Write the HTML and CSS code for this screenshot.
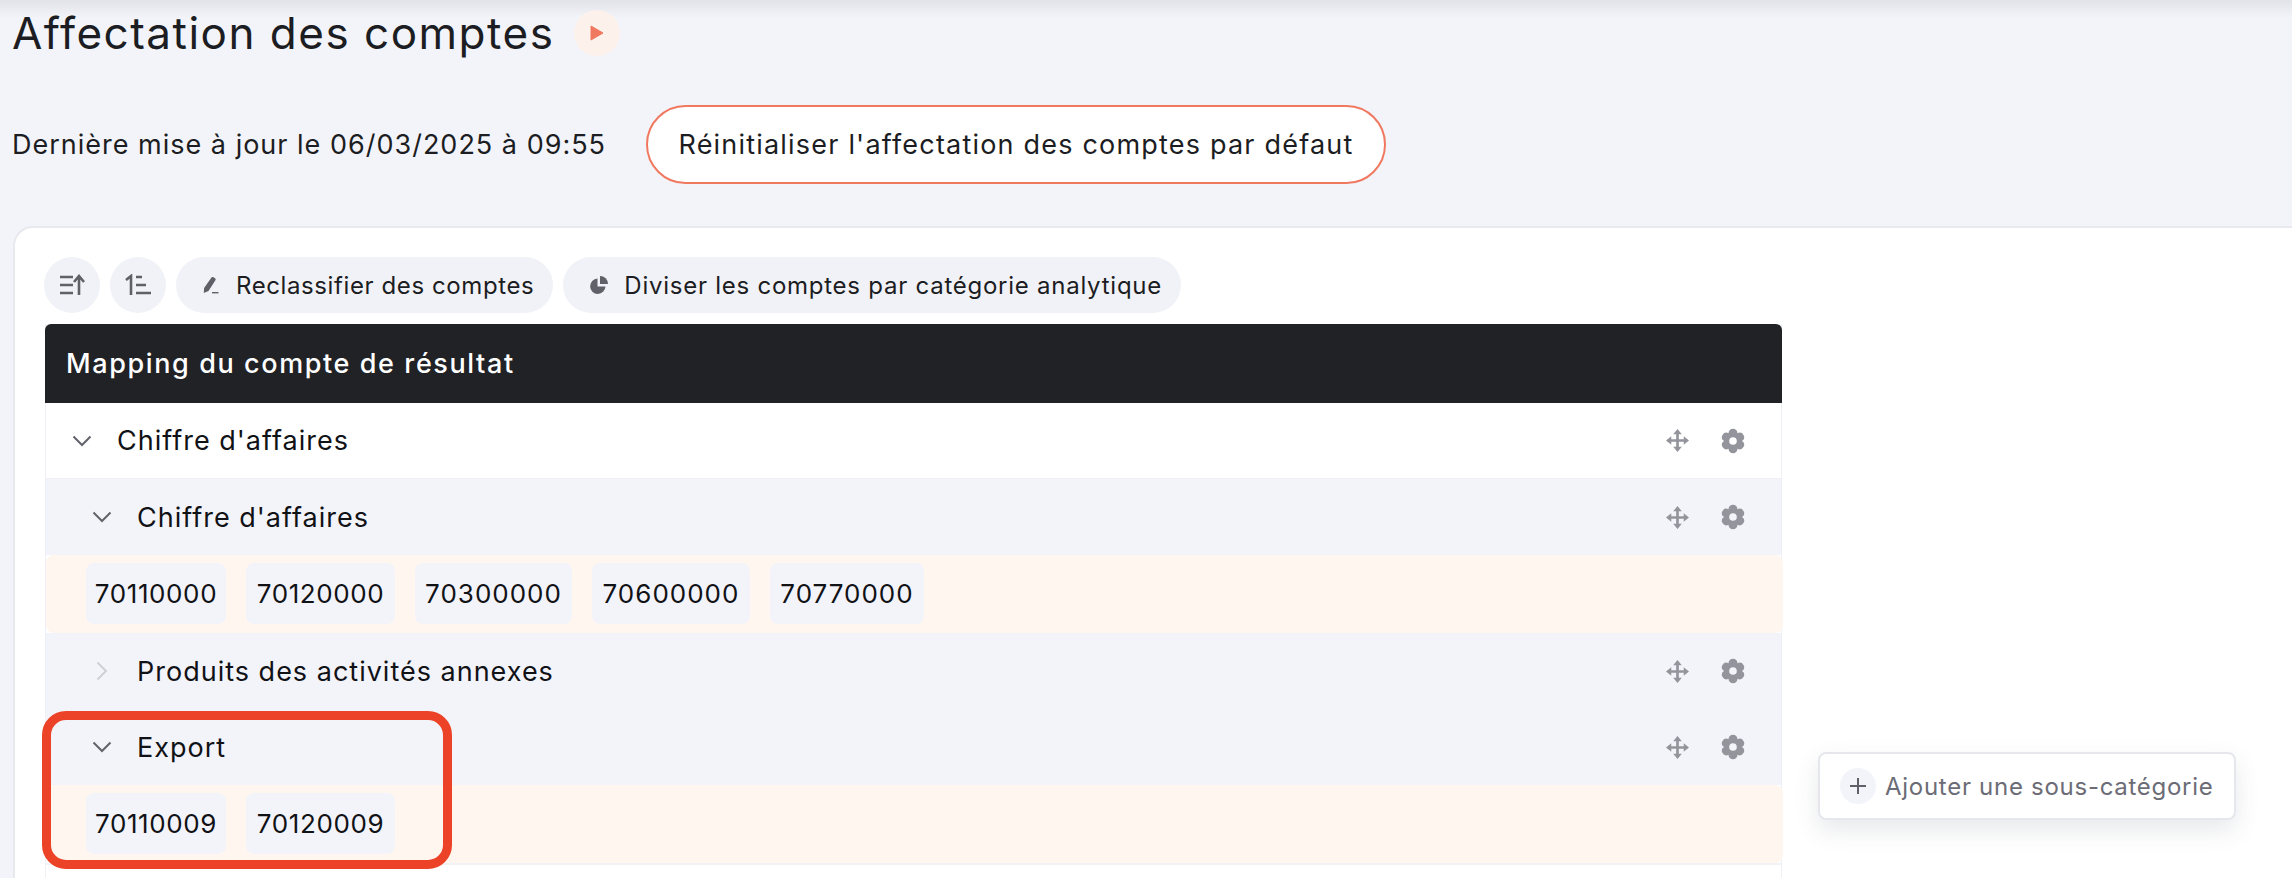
FILE: index.html
```html
<!DOCTYPE html>
<html lang="fr">
<head>
<meta charset="utf-8">
<title>Affectation des comptes</title>
<link rel="stylesheet" href="styles.css">
</head>
<body>
<svg class="defs" width="0" height="0" aria-hidden="true">
  <symbol id="move" viewBox="0 0 24 24">
    <path d="M12 3v18M3 12h18" fill="none" stroke="currentColor" stroke-width="2.800"/>
    <path d="M12 0l4.500 5.500h-9zM12 24l-4.500-5.500h9zM0 12l5.500-4.500v9zM24 12l-5.500-4.500v9z" fill="currentColor"/>
  </symbol>
  <symbol id="gear" viewBox="0 0 24 26">
    <path fill-rule="evenodd" fill="currentColor" d="M7.500 5.210A4.500 4.500 0 0 1 16.500 5.210A4.500 4.500 0 0 1 20.990 13A4.500 4.500 0 0 1 16.500 20.790A4.500 4.500 0 0 1 7.500 20.790A4.500 4.500 0 0 1 3.010 13A4.500 4.500 0 0 1 7.500 5.210zM12 9.200a3.800 3.800 0 1 0 0 7.600a3.800 3.800 0 0 0 0-7.600z"/>
  </symbol>
  <symbol id="chev-down" viewBox="0 0 20 12">
    <path d="M1.500 1.500L10 10l8.500-8.500" fill="none" stroke="currentColor" stroke-width="2"/>
  </symbol>
  <symbol id="chev-right" viewBox="0 0 12 20">
    <path d="M1.500 1.500L10 10l-8.500 8.500" fill="none" stroke="currentColor" stroke-width="2"/>
  </symbol>
</svg>

<header class="page-head">
  <div class="title-row">
    <h1 class="title">Affectation des comptes</h1>
    <span class="play"><svg width="14" height="16" viewBox="0 0 14 16"><path d="M1 1l12 7-12 7z" fill="#f0785f" stroke="#f0785f" stroke-linejoin="round"/></svg></span>
  </div>
  <div class="meta-row">
    <span class="updated">Dernière mise à jour le 06/03/2025 à 09:55</span>
    <button class="reset">Réinitialiser l'affectation des comptes par défaut</button>
  </div>
</header>

<main class="panel">
  <div class="toolbar">
    <button class="round-btn" aria-label="Trier">
      <svg width="26" height="22" viewBox="0 0 26 22"><path d="M1 3h13M1 11h13M1 19h13" stroke="#5f6068" stroke-width="2.600" fill="none"/><path d="M20 21V3M15 8l5-6 5 6" stroke="#5f6068" stroke-width="2.600" fill="none"/></svg>
    </button>
    <button class="round-btn" aria-label="Numéroter">
      <svg width="26" height="22" viewBox="0 0 26 22"><path d="M1 6l5-4v19" stroke="#5f6068" stroke-width="2.600" fill="none"/><path d="M11 3h6M11 11h10M11 19h15" stroke="#5f6068" stroke-width="2.600" fill="none"/></svg>
    </button>
    <button class="pill">
      <svg width="16" height="17" viewBox="0 0 16 17"><path d="M8.500.5a1.500 1.500 0 0 1 2-.2L12 1.300a1.500 1.500 0 0 1 .4 2L5.500 14 .8 16l.3-5z" fill="#5f6068"/><path d="M9 15.700h6.500" stroke="#5f6068" stroke-width="1.400"/></svg>
      Reclassifier des comptes
    </button>
    <button class="pill pill-wide">
      <svg width="18" height="18" viewBox="0 0 18 18"><path d="M7.500 2.500a7.700 7.700 0 1 0 8 8h-8z" fill="#5f6068"/><path d="M10 0a8 8 0 0 1 8 8h-8z" fill="#5f6068"/></svg>
      Diviser les comptes par catégorie analytique
    </button>
  </div>

  <div class="workspace">
    <section class="mapping">
      <div class="map-head">Mapping du compte de résultat</div>

      <div class="row row-top">
        <span class="row-label"><svg class="chev" width="20" height="12"><use href="#chev-down"/></svg>Chiffre d'affaires</span>
        <span class="row-tools"><svg class="tool" width="23" height="23"><use href="#move"/></svg><svg class="tool" width="24" height="26"><use href="#gear"/></svg></span>
      </div>

      <div class="row row-sub">
        <span class="row-label"><svg class="chev" width="20" height="12"><use href="#chev-down"/></svg>Chiffre d'affaires</span>
        <span class="row-tools"><svg class="tool" width="23" height="23"><use href="#move"/></svg><svg class="tool" width="24" height="26"><use href="#gear"/></svg></span>
      </div>
      <div class="tags">
        <span class="tag">70110000</span><span class="tag">70120000</span><span class="tag">70300000</span><span class="tag">70600000</span><span class="tag">70770000</span>
      </div>

      <div class="row row-sub">
        <span class="row-label"><svg class="chev chev-closed" width="12" height="20"><use href="#chev-right"/></svg>Produits des activités annexes</span>
        <span class="row-tools"><svg class="tool" width="23" height="23"><use href="#move"/></svg><svg class="tool" width="24" height="26"><use href="#gear"/></svg></span>
      </div>

      <div class="row row-sub">
        <span class="row-label"><svg class="chev" width="20" height="12"><use href="#chev-down"/></svg>Export</span>
        <span class="row-tools"><svg class="tool" width="23" height="23"><use href="#move"/></svg><svg class="tool" width="24" height="26"><use href="#gear"/></svg></span>
      </div>
      <div class="tags">
        <span class="tag">70110009</span><span class="tag">70120009</span>
      </div>
      <div class="table-rest"></div>
      <div class="highlight"></div>
    </section>

    <aside class="add-card">
      <span class="add-icon"><svg width="18" height="18" viewBox="0 0 18 18"><path d="M9 1v16M1 9h16" stroke="#5f6068" stroke-width="2"/></svg></span>
      Ajouter une sous-catégorie
    </aside>
  </div>
</main>
</body>
</html>
```
FILE: styles.css
```css
* { box-sizing: border-box; }
html, body { height: 100%; }
body {
  margin: 0;
  overflow: hidden;
  background: linear-gradient(#e2e3e8, #f3f4fa 18px) no-repeat #f3f4fa;
  background-size: 100% 18px;
  color: #1c1d22;
  font-family: Inter, "Noto Sans", sans-serif;
}
.defs { position: absolute; }
button { font-family: inherit; color: inherit; cursor: pointer; }

.page-head { padding-left: 12px; }
.title-row { display: flex; align-items: center; gap: 20px; height: 66px; }
.title { margin: 0; font-size: 44px; font-weight: 400; line-height: 66px; letter-spacing: 1.5px; }
.play {
  width: 46px; height: 46px; border-radius: 50%; background: #fdf1ec;
  display: flex; align-items: center; justify-content: center;
}
.meta-row { display: flex; align-items: center; margin-top: 39px; height: 79px; }
.updated { font-size: 27px; width: 634px; letter-spacing: 1px; white-space: nowrap; }
.reset {
  width: 740px; height: 79px; background: #fff;
  border: 2px solid #f0785f; border-radius: 40px;
  font-size: 27px; padding: 0; letter-spacing: 1.2px; white-space: nowrap;
}

.panel {
  margin: 42px -40px 0 13px;
  height: 800px;
  padding: 29px 0 0 30px;
  background: #fff;
  border: 2px solid #e8e9ef;
  border-radius: 20px 0 0 0;
}
.toolbar { display: flex; gap: 10px; height: 56px; margin-left: -1px; }
.round-btn {
  width: 56px; height: 56px; border: 0; border-radius: 50%; padding: 0;
  background: #f1f2f7; display: flex; align-items: center; justify-content: center;
}
.pill {
  display: flex; align-items: center; gap: 17px; height: 56px; border: 0;
  border-radius: 28px; background: #f1f2f7; padding: 0 19px 0 27px;
  font-size: 24px; letter-spacing: .6px; color: #1c1d22; white-space: nowrap;
}
.pill-wide { gap: 16px; padding-left: 27px; letter-spacing: .75px; }
.workspace { display: flex; margin-top: 11px; align-items: flex-start; }
.mapping {
  position: relative; width: 1737px; height: 600px; flex: none;
  border-left: 1px solid #eef0f5; border-right: 1px solid #eef0f5;
}
.map-head {
  height: 79px; margin: 0 -1px; padding-left: 21px; display: flex; align-items: center;
  background: #212226; color: #fff; border-radius: 6px 6px 0 0;
  font-size: 27px; font-weight: 500; letter-spacing: 1.6px;
}
.row {
  display: flex; align-items: center; justify-content: space-between; height: 76px;
  font-size: 27px; letter-spacing: 1px; color: #111216;
}
.row-top { background: #fff; padding-left: 26px; border-bottom: 1px solid #eef0f5; }
.row-sub { background: #f3f4fa; padding-left: 46px; }
.row-label { display: flex; align-items: center; }
.chev { color: #62636b; width: 20px; margin-right: 25px; }
.chev-closed { color: #cfd0d5; margin-right: 25px; }
.row-tools { display: flex; align-items: center; gap: 32px; padding-right: 36px; color: #94959c; }
.tool { display: block; }
.tags {
  display: flex; gap: 20px; height: 78px; padding: 8px 0 0 40px;
  background: #fff6f0; border-radius: 8px; margin-right: -2px;
}
.tag {
  height: 61px; width: 140px; display: flex; align-items: center; justify-content: center;
  background: #f3f4fa; border-radius: 8px; font-size: 26px; letter-spacing: .6px; color: #111216;
}
.tag:nth-child(2) { width: 149px; }
.tag:nth-child(3) { width: 157px; letter-spacing: 1px; }
.tag:nth-child(4) { width: 158px; letter-spacing: 1px; }
.tag:nth-child(5) { width: 154px; letter-spacing: 1px; }
.table-rest { height: 120px; border-top: 2px solid #f1f2f6; }
.highlight {
  position: absolute; left: -4px; top: 387px; width: 410px; height: 158px;
  border: 9px solid #ec4227; border-radius: 24px;
}
.add-card {
  display: flex; align-items: center; gap: 9px; flex: none;
  margin: 428px 0 0 36px; width: 418px; height: 68px; padding-left: 20px;
  background: #fff; border: 2px solid #e6e7ec; border-radius: 8px;
  box-shadow: 0 10px 24px rgba(60, 64, 90, .12);
  font-size: 24px; letter-spacing: .72px; color: #6b6c76; white-space: nowrap;
}
.add-icon {
  width: 36px; height: 36px; border-radius: 50%; background: #f3f4fa;
  display: flex; align-items: center; justify-content: center;
}
```
